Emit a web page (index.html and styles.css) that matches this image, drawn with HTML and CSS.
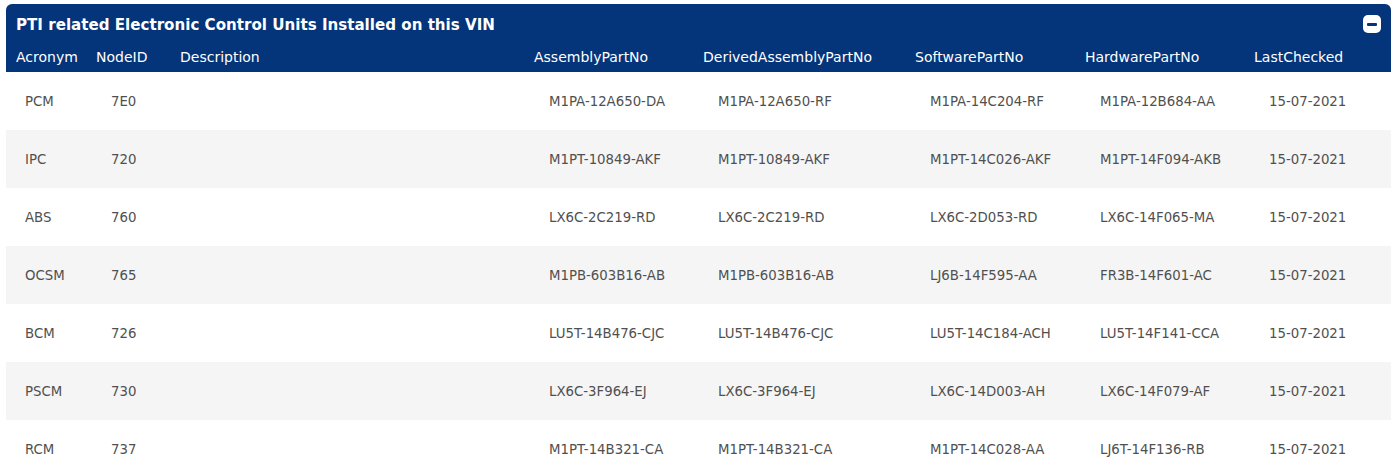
FILE: index.html
```html
<!DOCTYPE html>
<html>
<head>
<meta charset="utf-8">
<link rel="stylesheet" href="styles.css">
</head>
<body>
<div class="panel">
  <div class="panel-title">
    <span class="title-text">PTI related Electronic Control Units Installed on this VIN</span>
    <span class="collapse-btn" aria-label="collapse"><span class="minus"></span></span>
  </div>
  <table class="ecu-table">
    <colgroup>
      <col class="c-acr"><col class="c-node"><col class="c-desc"><col class="c-asm"><col class="c-der"><col class="c-sw"><col class="c-hw"><col class="c-date">
    </colgroup>
    <thead>
      <tr>
        <th>Acronym</th><th>NodeID</th><th>Description</th><th>AssemblyPartNo</th><th>DerivedAssemblyPartNo</th><th>SoftwarePartNo</th><th>HardwarePartNo</th><th>LastChecked</th>
      </tr>
    </thead>
    <tbody>
      <tr><td>PCM</td><td>7E0</td><td></td><td>M1PA-12A650-DA</td><td>M1PA-12A650-RF</td><td>M1PA-14C204-RF</td><td>M1PA-12B684-AA</td><td>15-07-2021</td></tr>
      <tr><td>IPC</td><td>720</td><td></td><td>M1PT-10849-AKF</td><td>M1PT-10849-AKF</td><td>M1PT-14C026-AKF</td><td>M1PT-14F094-AKB</td><td>15-07-2021</td></tr>
      <tr><td>ABS</td><td>760</td><td></td><td>LX6C-2C219-RD</td><td>LX6C-2C219-RD</td><td>LX6C-2D053-RD</td><td>LX6C-14F065-MA</td><td>15-07-2021</td></tr>
      <tr><td>OCSM</td><td>765</td><td></td><td>M1PB-603B16-AB</td><td>M1PB-603B16-AB</td><td>LJ6B-14F595-AA</td><td>FR3B-14F601-AC</td><td>15-07-2021</td></tr>
      <tr><td>BCM</td><td>726</td><td></td><td>LU5T-14B476-CJC</td><td>LU5T-14B476-CJC</td><td>LU5T-14C184-ACH</td><td>LU5T-14F141-CCA</td><td>15-07-2021</td></tr>
      <tr><td>PSCM</td><td>730</td><td></td><td>LX6C-3F964-EJ</td><td>LX6C-3F964-EJ</td><td>LX6C-14D003-AH</td><td>LX6C-14F079-AF</td><td>15-07-2021</td></tr>
      <tr><td>RCM</td><td>737</td><td></td><td>M1PT-14B321-CA</td><td>M1PT-14B321-CA</td><td>M1PT-14C028-AA</td><td>LJ6T-14F136-RB</td><td>15-07-2021</td></tr>
    </tbody>
  </table>
</div>
</body>
</html>
```

FILE: styles.css
```css
html, body {
  margin: 0;
  padding: 0;
  background: #ffffff;
}
body {
  padding: 4px 6px 0 6px;
  font-family: "DejaVu Sans", Verdana, sans-serif;
}
.panel {
  width: 1385px;
}
.panel-title {
  background: #043479;
  border-radius: 6px 6px 0 0;
  height: 36px;
  display: flex;
  align-items: flex-start;
  justify-content: space-between;
  padding: 12px 10px 0 10px;
  box-sizing: border-box;
}
.title-text {
  color: #ffffff;
  font-weight: bold;
  font-size: 15.1px;
  line-height: 18px;
}
.collapse-btn {
  width: 18px;
  height: 18px;
  background: #ffffff;
  border-radius: 5px;
  display: flex;
  align-items: center;
  justify-content: center;
  margin-top: -1px;
}
.minus {
  width: 10px;
  height: 3px;
  background: #043479;
  border-radius: 1px;
}
.ecu-table {
  width: 1385px;
  border-collapse: collapse;
  table-layout: fixed;
}
.c-acr { width: 80px; }
.c-node { width: 84px; }
.c-desc { width: 354px; }
.c-asm { width: 169px; }
.c-der { width: 212px; }
.c-sw { width: 170px; }
.c-hw { width: 169px; }
.c-date { width: 147px; }
.ecu-table thead tr {
  background: #043479;
  height: 32px;
}
.ecu-table th {
  color: #ffffff;
  font-weight: normal;
  font-size: 14px;
  text-align: left;
  padding: 1px 0 0 10px;
  vertical-align: middle;
  white-space: nowrap;
}
.ecu-table tbody tr {
  height: 58px;
}
.ecu-table tbody tr:nth-child(even) {
  background: #f5f5f5;
}
.ecu-table td {
  color: #505050;
  font-size: 13.3px;
  padding: 0 0 0 25px;
  vertical-align: middle;
  white-space: nowrap;
}
.ecu-table td:first-child {
  padding-left: 19px;
}
```
